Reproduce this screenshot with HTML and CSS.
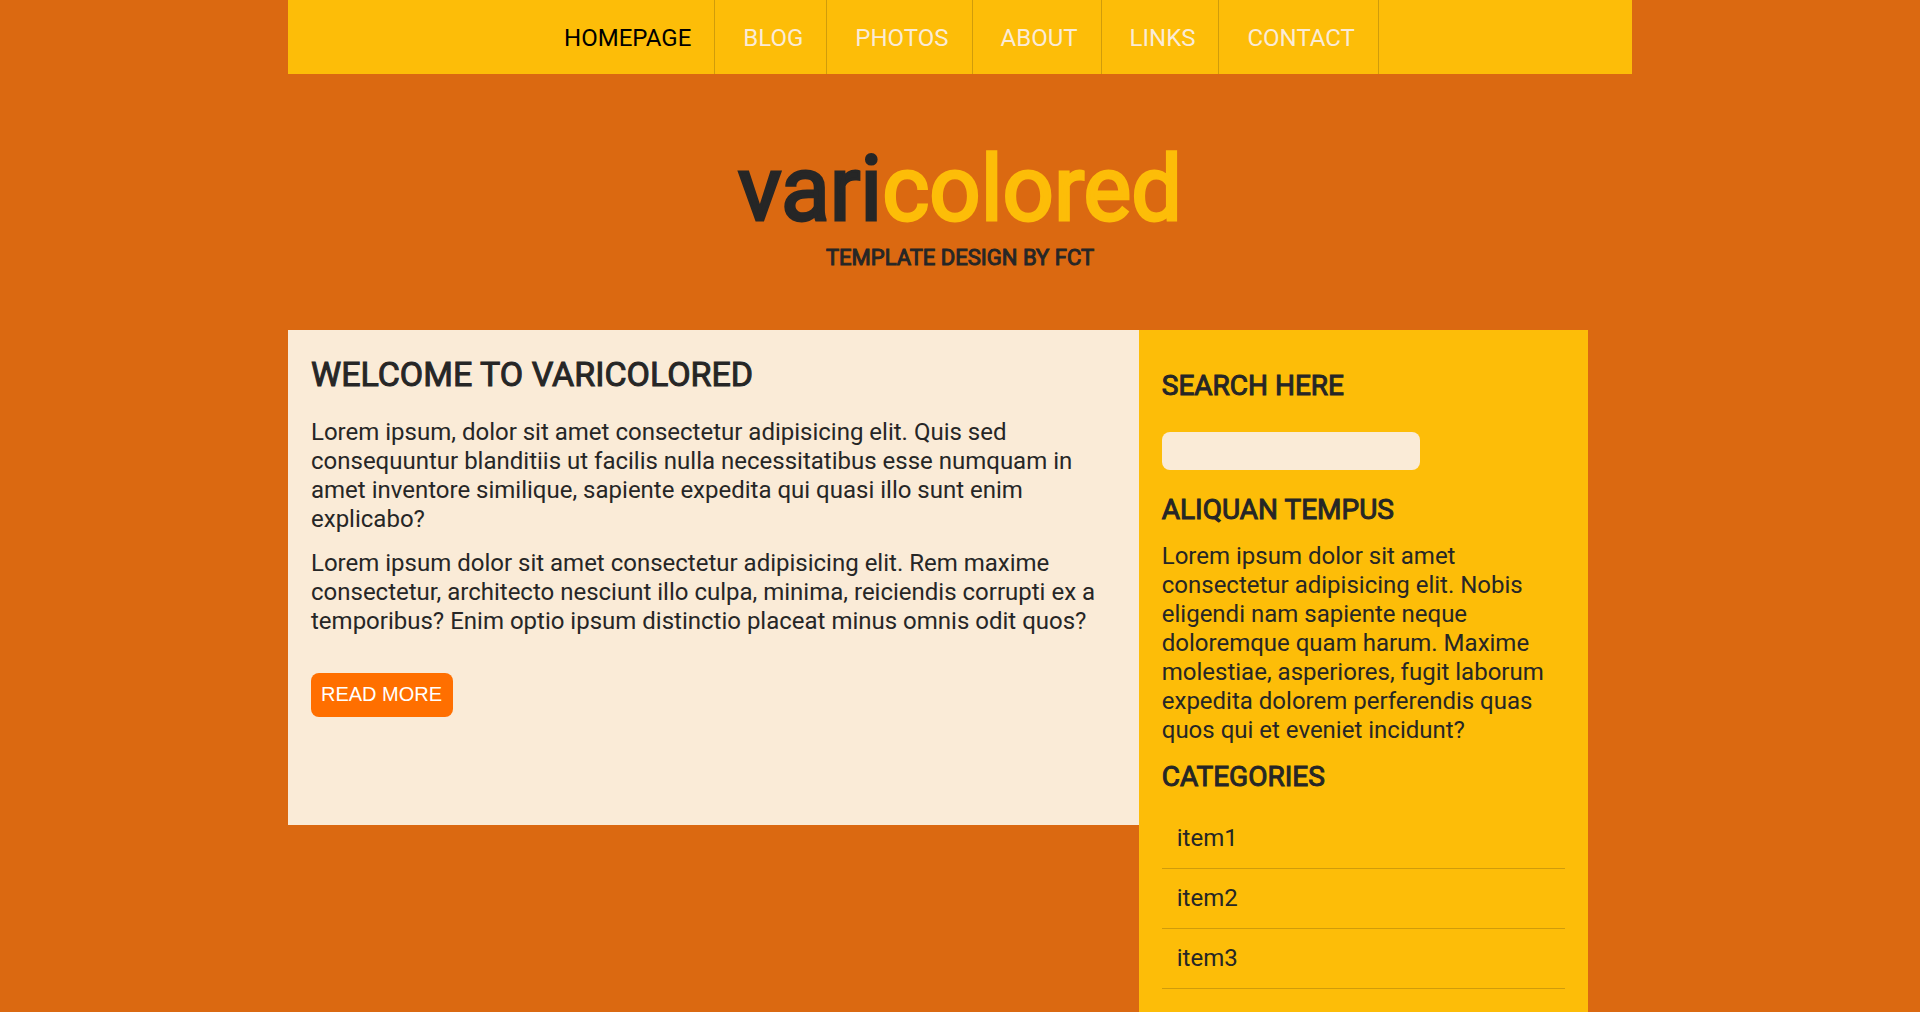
FILE: index.html
```html
<!DOCTYPE html>
<html lang="en">
<head>
  <meta charset="utf-8">
  <meta name="viewport" content="width=device-width, initial-scale=1">
  <title>Varicolored</title>
  <link rel="stylesheet" href="styles.css">
</head>
<body>
  <div class="container">
    <nav class="menu">
      <a class="menu-link active" href="#">HOMEPAGE</a>
      <a class="menu-link" href="#">BLOG</a>
      <a class="menu-link" href="#">PHOTOS</a>
      <a class="menu-link" href="#">ABOUT</a>
      <a class="menu-link" href="#">LINKS</a>
      <a class="menu-link" href="#">CONTACT</a>
    </nav>
    <header class="header">
      <h1 class="logo">vari<span class="logo-accent">colored</span></h1>
      <p class="tagline">TEMPLATE DESIGN BY FCT</p>
    </header>
    <div class="content">
      <main class="main">
        <h2 class="main-title">WELCOME TO VARICOLORED</h2>
        <p class="text">Lorem ipsum, dolor sit amet consectetur adipisicing elit. Quis sed consequuntur blanditiis ut facilis nulla necessitatibus esse numquam in amet inventore similique, sapiente expedita qui quasi illo sunt enim explicabo?</p>
        <p class="text">Lorem ipsum dolor sit amet consectetur adipisicing elit. Rem maxime consectetur, architecto nesciunt illo culpa, minima, reiciendis corrupti ex a temporibus? Enim optio ipsum distinctio placeat minus omnis odit quos?</p>
        <button class="read-more" type="button">READ MORE</button>
      </main>
      <aside class="sidebar">
        <h3 class="side-title"><label for="search">SEARCH HERE</label></h3>
        <input class="search" id="search" type="text">
        <h3 class="side-title">ALIQUAN TEMPUS</h3>
        <p class="text">Lorem ipsum dolor sit amet consectetur adipisicing elit. Nobis eligendi nam sapiente neque doloremque quam harum. Maxime molestiae, asperiores, fugit laborum expedita dolorem perferendis quas quos qui et eveniet incidunt?</p>
        <h3 class="side-title">CATEGORIES</h3>
        <ul class="categories">
          <li class="category">item1</li>
          <li class="category">item2</li>
          <li class="category">item3</li>
        </ul>
      </aside>
    </div>
  </div>
</body>
</html>
```
FILE: styles.css
```css
* {
  box-sizing: border-box;
  margin: 0;
  padding: 0;
}

body {
  background: #db6911;
  color: #262626;
  font-family: Roboto, "Liberation Sans", sans-serif;
  font-size: 24px;
  line-height: 29px;
}

.container {
  width: 70%;
  margin: 0 auto;
}

.menu {
  display: flex;
  justify-content: center;
  gap: 5px;
  background: #fdbd08;
}

.menu-link {
  padding: 24px 23px 21px;
  border-right: 1px solid #d09c0b;
  color: antiquewhite;
  text-decoration: none;
}

.menu-link.active {
  color: #000;
}

.header {
  padding: 61px 0 60px;
  text-align: center;
}

/* Headings use the regular cut, thickened with a stroke */
.logo,
.tagline,
.main-title,
.side-title {
  font-weight: 400;
  -webkit-text-stroke: 1px currentColor;
}

.logo {
  font-size: 90px;
  line-height: 110px;
  -webkit-text-stroke-width: 3px;
}

.logo-accent {
  color: #fdbd08;
}

.tagline {
  font-size: 22px;
  line-height: 25px;
}

.content {
  display: flex;
  align-items: flex-start;
}

.main {
  flex: 0 0 63.3%;
  padding: 23px 23px 108px;
  background: antiquewhite;
}

.main-title {
  margin-bottom: 23px;
  font-size: 34px;
  line-height: 42px;
}

.main .text {
  margin-bottom: 15px;
}

.read-more {
  display: block;
  margin-top: 37px;
  padding: 10px 11px 12px 10px;
  border: 0;
  border-radius: 8px;
  background: #ff6f00;
  color: #fff;
  font: 20px/22px "Liberation Sans", Arial, sans-serif;
}

.sidebar {
  flex: 0 0 33.4%;
  padding: 39px 23px;
  background: #fdbd08;
}

.side-title {
  font-size: 28px;
  line-height: 34px;
}

.search {
  display: block;
  width: 258px;
  height: 38px;
  margin: 29px 0 23px;
  padding: 0 10px;
  border: 0;
  border-radius: 8px;
  background: antiquewhite;
  font: inherit;
}

.sidebar .text {
  margin: 15px 0;
}

.categories {
  margin-top: 15px;
  list-style: none;
}

.category {
  padding: 15px;
  border-bottom: 1px solid #d09c0b;
}
```
